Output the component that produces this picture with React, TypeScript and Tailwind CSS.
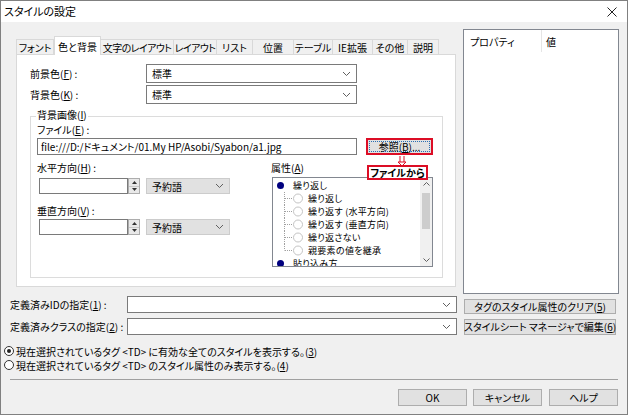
import React from "react";

const tabs: { label: string; w: string; active?: boolean; tight?: boolean }[] = [
  { label: "フォント", w: "w-[38px]" },
  { label: "色と背景", w: "w-[47px]", active: true },
  { label: "文字のレイアウト", w: "w-[73px]", tight: true },
  { label: "レイアウト", w: "w-[43px]", tight: true },
  { label: "リスト", w: "w-[36px]" },
  { label: "位置", w: "w-[41px]" },
  { label: "テーブル", w: "w-[39px]" },
  { label: "IE拡張", w: "w-[40px]" },
  { label: "その他", w: "w-[35px]" },
  { label: "説明", w: "w-[31px]" },
];

function Acc({ pre, k, post = "" }: { pre: string; k: string; post?: string }) {
  return (
    <span>
      {pre}(<u>{k}</u>){post}
    </span>
  );
}

function Chevron() {
  return (
    <svg width="9" height="6" viewBox="0 0 9 6" className="shrink-0">
      <path d="M1 1 L4.5 4.5 L8 1" fill="none" stroke="#606060" strokeWidth="1" />
    </svg>
  );
}

function Combo({ w, value, gray }: { w: string; value?: string; gray?: boolean }) {
  return (
    <div
      className={`${w} h-full border flex items-center justify-between pl-[5px] pr-[5px] ${
        gray ? "bg-[#e1e1e1] border-[#cccccc]" : "bg-white border-[#7a7a7a]"
      }`}
    >
      <span>{value}</span>
      <Chevron />
    </div>
  );
}

function Spin() {
  return (
    <div className="w-[12px] h-full border border-[#adadad] bg-[#e9e9e9] flex flex-col">
      <div className="flex-1 flex items-center justify-center border-b border-[#c8c8c8]">
        <svg width="5" height="3" viewBox="0 0 5 3">
          <path d="M0 3 L2.5 0 L5 3 Z" fill="#333" />
        </svg>
      </div>
      <div className="flex-1 flex items-center justify-center">
        <svg width="5" height="3" viewBox="0 0 5 3">
          <path d="M0 0 L2.5 3 L5 0 Z" fill="#333" />
        </svg>
      </div>
    </div>
  );
}

function ParentRow({ label }: { label: string }) {
  return (
    <div className="h-[13px] flex items-center whitespace-nowrap">
      <span className="ml-[4px] w-[7px] h-[7px] rounded-full bg-[#00007f] shrink-0" />
      <span className="ml-[9px]">{label}</span>
    </div>
  );
}

function ChildRow({ label, last }: { label: string; last?: boolean }) {
  return (
    <div className="h-[13px] flex items-center whitespace-nowrap">
      <svg width="31" height="13" viewBox="0 0 31 13" className="shrink-0">
        <line x1="11.5" y1="0" x2="11.5" y2={last ? 6.5 : 13} stroke="#a0a0a0" strokeDasharray="1 1" />
        <line x1="12" y1="6.5" x2="20" y2="6.5" stroke="#a0a0a0" strokeDasharray="1 1" />
        <circle cx="25" cy="6.5" r="4.5" fill="white" stroke="#c4c4c4" />
      </svg>
      <span className="ml-[4px]">{label}</span>
    </div>
  );
}

function Button({ children, w }: { children: React.ReactNode; w: string }) {
  return (
    <div
      className={`${w} h-full bg-[#e1e1e1] border border-[#adadad] flex items-center justify-center whitespace-nowrap`}
    >
      {children}
    </div>
  );
}

function Radio({ checked }: { checked?: boolean }) {
  return (
    <span className="w-[10px] h-[10px] rounded-full border border-[#333] bg-white flex items-center justify-center shrink-0">
      {checked && <span className="w-[4px] h-[4px] rounded-full bg-[#222]" />}
    </span>
  );
}

export default function App() {
  return (
    <div className="w-[628px] h-[415px] bg-[#f0f0f0] border border-[#808080] flex flex-col overflow-hidden text-[10px] leading-[13px] text-black font-['Noto_Sans_CJK_JP','Noto_Sans',sans-serif] [font-feature-settings:'palt']">
      {/* Title bar */}
      <div className="h-[21px] bg-white flex items-center justify-between pl-[3px] pr-[10px] shrink-0">
        <span className="text-[11px]">スタイルの設定</span>
        <svg width="10" height="10" viewBox="0 0 10 10">
          <path d="M0.5 0.5 L9.5 9.5 M9.5 0.5 L0.5 9.5" stroke="#222" strokeWidth="1" />
        </svg>
      </div>

      {/* Top section */}
      <div className="flex items-start shrink-0">
        {/* Tab control */}
        <div className="ml-[15px] mt-[14px] w-[440px] flex flex-col">
          <div className="flex items-end h-[18px]">
            {tabs.map((t) =>
              t.active ? (
                <div
                  key={t.label}
                  className={`${t.w} h-[19px] -mb-px relative z-10 bg-white border border-b-0 border-[#d9d9d9] flex items-center justify-center whitespace-nowrap`}
                >
                  {t.label}
                </div>
              ) : (
                <div
                  key={t.label}
                  className={`${t.w} h-[15px] bg-[#f0f0f0] border border-b-0 border-l-0 first:border-l border-[#d9d9d9] flex items-center justify-center whitespace-nowrap overflow-hidden ${
                    t.tight ? "tracking-[-0.6px]" : ""
                  }`}
                >
                  {t.label}
                </div>
              )
            )}
          </div>
          <div className="relative h-[233px] bg-white border border-[#d9d9d9] pl-[13px] pt-[9px] flex flex-col">
            <div className="flex items-center h-[19px]">
              <span className="w-[116px]">
                <Acc pre="前景色" k="F" post=" :" />
              </span>
              <Combo w="w-[211px]" value="標準" />
            </div>
            <div className="flex items-center h-[19px] mt-[2px]">
              <span className="w-[116px]">
                <Acc pre="背景色" k="K" post=" :" />
              </span>
              <Combo w="w-[211px]" value="標準" />
            </div>

            {/* Group box */}
            <div className="relative mt-[12px] w-[413px] h-[162px] border border-[#dcdcdc] pl-[6px] pt-[7px] flex flex-col">
              <span className="absolute -top-[8px] left-[5px] px-[1px] bg-white leading-[11px]">
                <Acc pre="背景画像" k="I" />
              </span>
              <span className="h-[12px] leading-[12px]">
                <Acc pre="ファイル" k="E" post=" :" />
              </span>
              <div className="flex items-center h-[17px] mt-[2px]">
                <div className="w-[320px] h-full border border-[#7a7a7a] bg-white flex items-center pl-[3px] whitespace-nowrap">
                  file:///D:/ドキュメント/01.My HP/Asobi/Syabon/a1.jpg
                </div>
                <div className="ml-[9px] w-[67px] h-full border-2 border-[#dc0d25] bg-[#e1e1e1] p-px">
                  <div className="w-full h-full border border-dotted border-[#2b6fb3] flex items-center justify-center">
                    <Acc pre="参照" k="B" post="..." />
                  </div>
                </div>
              </div>

              <div className="flex mt-[6px]">
                <div className="w-[194px] flex flex-col">
                  <span className="h-[13px]">
                    <Acc pre="水平方向" k="H" post=" :" />
                  </span>
                  <div className="flex h-[16px] mt-[4px] ml-[2px]">
                    <div className="w-[89px] h-full border border-[#7a7a7a] bg-white" />
                    <Spin />
                    <div className="ml-[6px] h-full">
                      <Combo w="w-[84px]" value="予約語" gray />
                    </div>
                  </div>
                  <span className="h-[13px] mt-[10px]">
                    <Acc pre="垂直方向" k="V" post=" :" />
                  </span>
                  <div className="flex h-[16px] mt-[2px] ml-[2px]">
                    <div className="w-[89px] h-full border border-[#7a7a7a] bg-white" />
                    <Spin />
                    <div className="ml-[6px] h-full">
                      <Combo w="w-[84px]" value="予約語" gray />
                    </div>
                  </div>
                </div>

                <div className="ml-[40px] flex flex-col">
                  <span className="h-[13px]">
                    <Acc pre="属性" k="A" />
                  </span>
                  <div className="mt-[3px] ml-[1px] w-[161px] h-[90px] border border-[#828790] bg-white flex overflow-hidden">
                    <div className="flex-1 pt-px overflow-hidden text-[9px] tracking-[0.3px]">
                      <ParentRow label="繰り返し" />
                      <ChildRow label="繰り返し" />
                      <ChildRow label="繰り返す (水平方向)" />
                      <ChildRow label="繰り返す (垂直方向)" />
                      <ChildRow label="繰り返さない" />
                      <ChildRow label="親要素の値を継承" last />
                      <ParentRow label="貼り込み方" />
                    </div>
                    <div className="w-[12px] bg-[#f0f0f0] flex flex-col">
                      <div className="h-[12px] flex items-center justify-center">
                        <svg width="7" height="4" viewBox="0 0 7 4">
                          <path d="M0.5 3.5 L3.5 0.5 L6.5 3.5" fill="none" stroke="#606060" />
                        </svg>
                      </div>
                      <div className="mt-[3px] mx-[2px] h-[36px] bg-[#cdcdcd]" />
                      <div className="flex-1" />
                      <div className="h-[12px] flex items-center justify-center">
                        <svg width="7" height="4" viewBox="0 0 7 4">
                          <path d="M0.5 0.5 L3.5 3.5 L6.5 0.5" fill="none" stroke="#606060" />
                        </svg>
                      </div>
                    </div>
                  </div>
                </div>
              </div>
            </div>

            {/* Annotation */}
            <svg
              width="12"
              height="11"
              viewBox="0 0 12 11"
              className="absolute left-[379px] top-[101px]"
            >
              <path d="M4 0 V6 M8 0 V6" stroke="#dc0d25" strokeWidth="1" />
              <path d="M2 6 H10 L6 10 Z" fill="none" stroke="#dc0d25" strokeWidth="1" />
            </svg>
            <div className="absolute left-[350px] top-[110px] w-[61px] h-[15px] border-2 border-[#dc0d25] bg-white flex items-center justify-center font-bold whitespace-nowrap">
              ファイルから
            </div>
          </div>
        </div>

        {/* Property list */}
        <div className="ml-[7px] mt-[7px] w-[156px] h-[265px] border border-[#828790] bg-white flex items-start">
          <div className="w-[78px] h-[22px] pl-[6px] pt-[5px] border-r border-[#e5e5e5]">プロパティ</div>
          <div className="pl-[4px] pt-[5px]">値</div>
        </div>
      </div>

      {/* Bottom section */}
      <div className="flex items-center h-[17px] mt-[2px] pl-[9px] shrink-0">
        <span className="w-[117px] whitespace-nowrap">
          <Acc pre="定義済みIDの指定" k="1" post=" :" />
        </span>
        <Combo w="w-[330px]" />
        <div className="ml-[7px] h-[15px] mt-[3px]">
          <Button w="w-[152px]">
            <Acc pre="タグのスタイル属性のクリア" k="5" />
          </Button>
        </div>
      </div>
      <div className="flex items-center h-[17px] mt-[5px] pl-[9px] shrink-0">
        <span className="w-[117px] whitespace-nowrap">
          <Acc pre="定義済みクラスの指定" k="2" post=" :" />
        </span>
        <Combo w="w-[330px]" />
        <div className="ml-[7px] h-[16px]">
          <Button w="w-[152px]">
            <Acc pre="スタイルシート マネージャで編集" k="6" />
          </Button>
        </div>
      </div>
      <div className="flex items-center gap-[2px] h-[14px] mt-[9px] pl-[3px] whitespace-nowrap shrink-0">
        <Radio checked />
        <Acc pre="現在選択されているタグ <TD> に有効な全てのスタイルを表示する。" k="3" />
      </div>
      <div className="flex items-center gap-[2px] h-[14px] pl-[3px] whitespace-nowrap shrink-0">
        <Radio />
        <Acc pre="現在選択されているタグ <TD> のスタイル属性のみ表示する。" k="4" />
      </div>
      <div className="mt-[7px] ml-[9px] mr-[9px] h-px bg-[#a0a0a0] shrink-0" />
      <div className="flex justify-end h-[17px] mt-[9px] pr-[9px] shrink-0">
        <Button w="w-[69px]">OK</Button>
        <div className="ml-[6px] h-full">
          <Button w="w-[69px]">キャンセル</Button>
        </div>
        <div className="ml-[7px] h-full">
          <Button w="w-[69px]">ヘルプ</Button>
        </div>
      </div>
    </div>
  );
}
